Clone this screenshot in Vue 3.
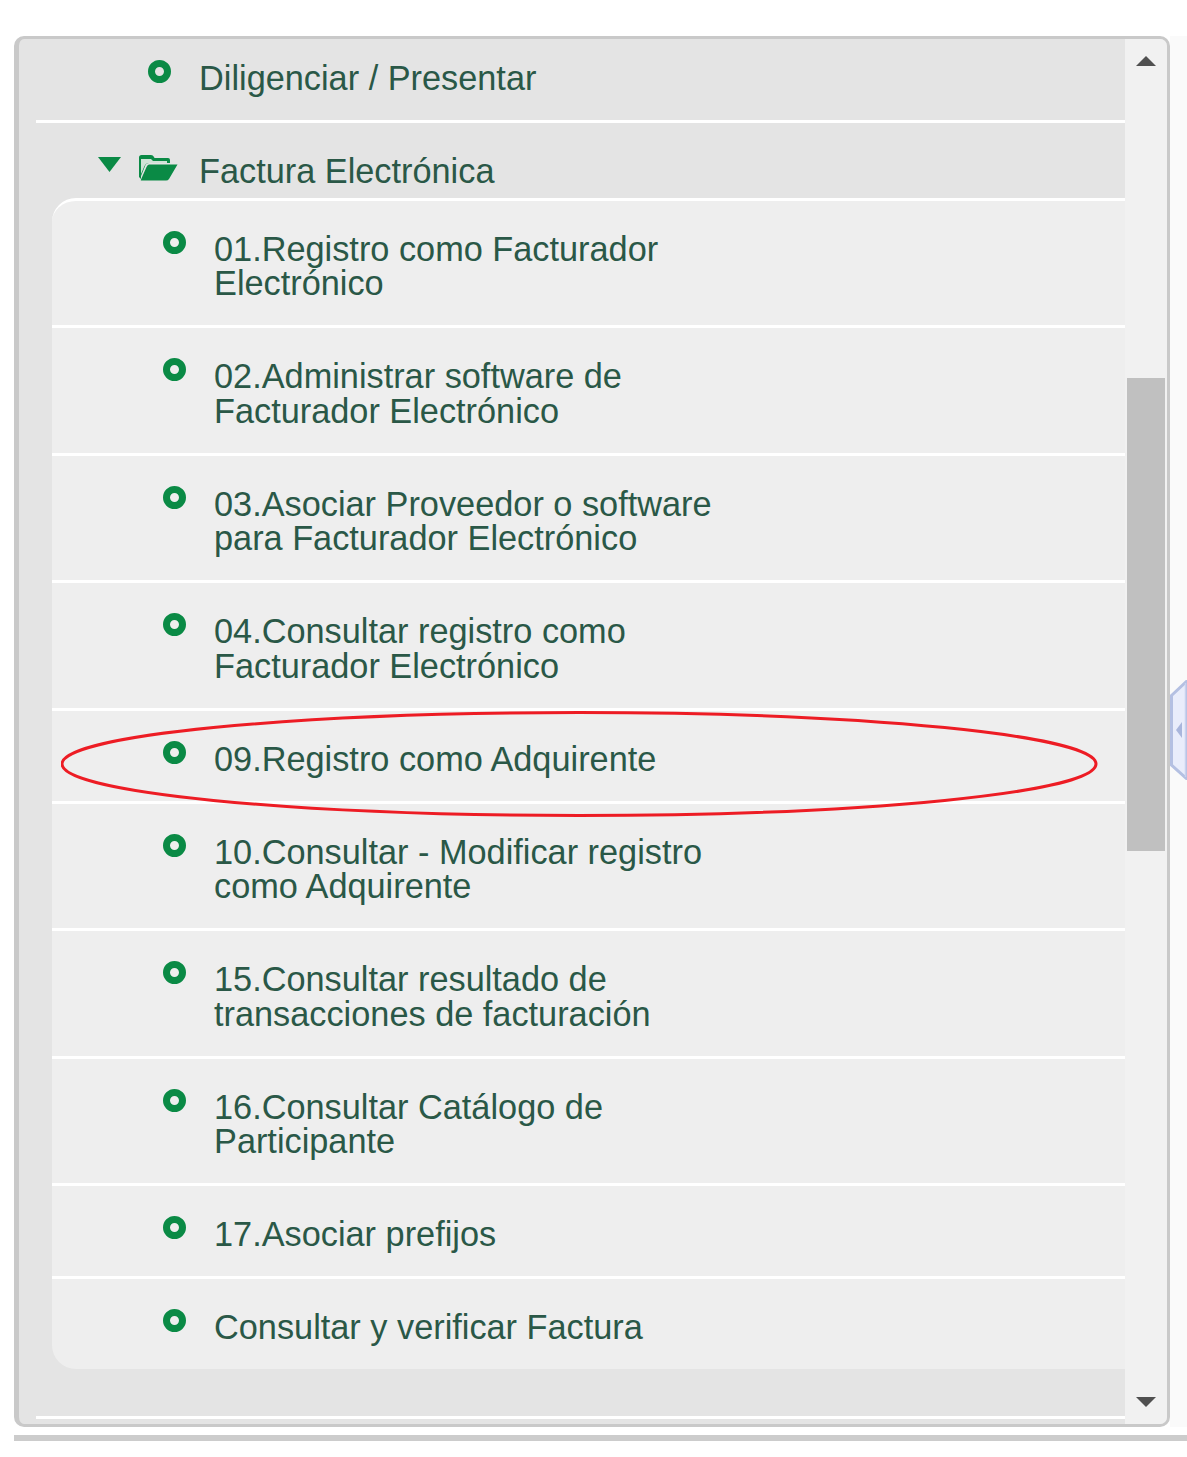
<template>
  <div class="page">
    <div class="frame-row">
      <div class="frame">
        <div class="tree">
          <div class="row top-row">
            <span class="leaf"></span>
            <span class="label">Diligenciar / Presentar</span>
          </div>
          <div class="row folder-row">
            <svg class="caret" width="23" height="15" viewBox="0 0 23 15"><path d="M0 0H23L11.5 15Z" fill="#0a8a45" /></svg>
            <svg class="folder" width="40" height="27" viewBox="0 0 40 27">
              <path d="M1 3.5Q1 1 3.5 1H13Q15 1 16 3L16.5 4H30Q32 4 32 6V9H11Q8.5 9 7.5 11L3 22V25L1 23Z" fill="#0a8a45" />
              <path d="M3 5H13L15 7H29V9H11Q8 9 6.5 12L3 20Z" fill="#cfe3d6" />
              <path d="M11 10.500H39.500L31 25Q30 26.500 28 26.500H3Q2.500 26.500 3 25.500L8.500 13Q9.500 10.500 11 10.500Z" fill="#0a8a45" />
            </svg>
            <span class="label">Factura Electrónica</span>
          </div>
          <div class="sub-panel">
            <div v-for="item in items" :key="item" class="row sub-row">
              <span class="leaf"></span>
              <span class="label">{{ item }}</span>
            </div>
            <div class="row sub-row last">
              <span class="leaf"></span>
              <span class="label">Consultar y verificar Factura</span>
            </div>
          </div>
          <div class="end-line"></div>
        </div>
        <div class="scrollbar">
          <span class="arrow up"></span>
          <div class="thumb"></div>
          <span class="arrow down"></span>
        </div>
      </div>
      <div class="side">
        <svg class="handle" width="17" height="100" viewBox="0 0 17 100">
          <path d="M1.500 15.500L17 1V99L1.500 85Z" fill="#e9edfb" stroke="#b4c0e2" stroke-width="3" />
          <path d="M15.500 3V97" stroke="#c9d2ee" stroke-width="1.500" />
          <path d="M6 50L12 42V58Z" fill="#a9b6dc" />
        </svg>
      </div>
    </div>
    <div class="bottom-strip"></div>
    <svg class="circle" width="1040" height="108" viewBox="0 0 1040 108">
      <ellipse cx="518" cy="54" rx="517" ry="51.500" fill="none" stroke="#ed1c24" stroke-width="3" />
    </svg>
  </div>
</template>

<script setup>
const items = [
  '01.Registro como Facturador Electrónico',
  '02.Administrar software de Facturador Electrónico',
  '03.Asociar Proveedor o software para Facturador Electrónico',
  '04.Consultar registro como Facturador Electrónico',
  '09.Registro como Adquirente',
  '10.Consultar - Modificar registro como Adquirente',
  '15.Consultar resultado de transacciones de facturación',
  '16.Consultar Catálogo de Participante',
  '17.Asociar prefijos',
]
</script>

<style>
html,
body {
  background: #fff;
}
</style>

<style scoped>
.page {
  position: relative;
  width: 1187px;
  height: 1457px;
  padding: 36px 0 0 14px;
  box-sizing: border-box;
  overflow: hidden;
  font-family: "Liberation Sans", Arial, sans-serif;
}
.frame-row {
  display: flex;
  height: 1391px;
}
.frame {
  display: flex;
  width: 1156px;
  box-sizing: border-box;
  border: 3px solid #c9c9c9;
  border-left-width: 5px;
  border-radius: 10px;
  overflow: hidden;
  background: #e4e4e4;
}
.tree {
  flex: 1;
  min-width: 0;
  border-top: 1px solid #f2f2f2;
  margin-top: -1px;
}
.row {
  display: flex;
  align-items: flex-start;
  margin-left: 17px;
  padding-left: 112px;
  color: #2a5847;
  font-size: 34.300px;
  line-height: 34.400px;
}
.top-row {
  padding-top: 22px;
  padding-bottom: 24.600px;
  border-bottom: 3px solid #fff;
}
.folder-row {
  padding-top: 31px;
  padding-left: 62px;
  height: 43.600px;
  box-sizing: content-box;
}
.caret {
  flex: none;
  margin-top: 3px;
  margin-right: 17px;
  filter: blur(0.4px);
}
.folder {
  flex: none;
  margin-right: 21px;
  filter: blur(0.4px);
}
.leaf {
  flex: none;
  width: 23px;
  height: 23px;
  box-sizing: border-box;
  border: 7px solid #0a8a45;
  border-radius: 50%;
  margin-top: -1px;
  margin-right: 28px;
  filter: blur(0.5px);
}
.label {
  width: 530px;
}
.sub-panel {
  margin-left: 33px;
  background: #eeeeee;
  border-top: 3px solid #fff;
  border-radius: 24px 0 0 24px;
  overflow: hidden;
}
.sub-row {
  margin-left: 0;
  padding-left: 111px;
  padding-top: 31px;
  padding-bottom: 24.700px;
  border-bottom: 3px solid #fff;
}
.sub-row.last {
  border-bottom: 0;
  padding-bottom: 24.400px;
}
.end-line {
  height: 3px;
  margin: 47px 0 0 17px;
  background: #fff;
}
.scrollbar {
  flex: none;
  width: 42px;
  display: flex;
  flex-direction: column;
  align-items: center;
  background: #f1f1f1;
  padding: 17px 0 17px;
  box-sizing: border-box;
}
.thumb {
  width: 38px;
  height: 473px;
  margin-top: 312px;
  background: #c0c0c0;
}
.arrow {
  flex: none;
  width: 0;
  height: 0;
  border-left: 10.500px solid transparent;
  border-right: 10.500px solid transparent;
}
.arrow.up {
  border-bottom: 10px solid #505050;
}
.arrow.down {
  margin-top: auto;
  border-top: 10px solid #505050;
}
.side {
  position: relative;
  flex: 1;
  background: #fafafa;
}
.handle {
  position: absolute;
  left: 0;
  top: 644px;
}
.bottom-strip {
  height: 6px;
  margin-top: 8px;
  background: #cccccc;
}
.circle {
  position: absolute;
  left: 61px;
  top: 710px;
}
</style>
